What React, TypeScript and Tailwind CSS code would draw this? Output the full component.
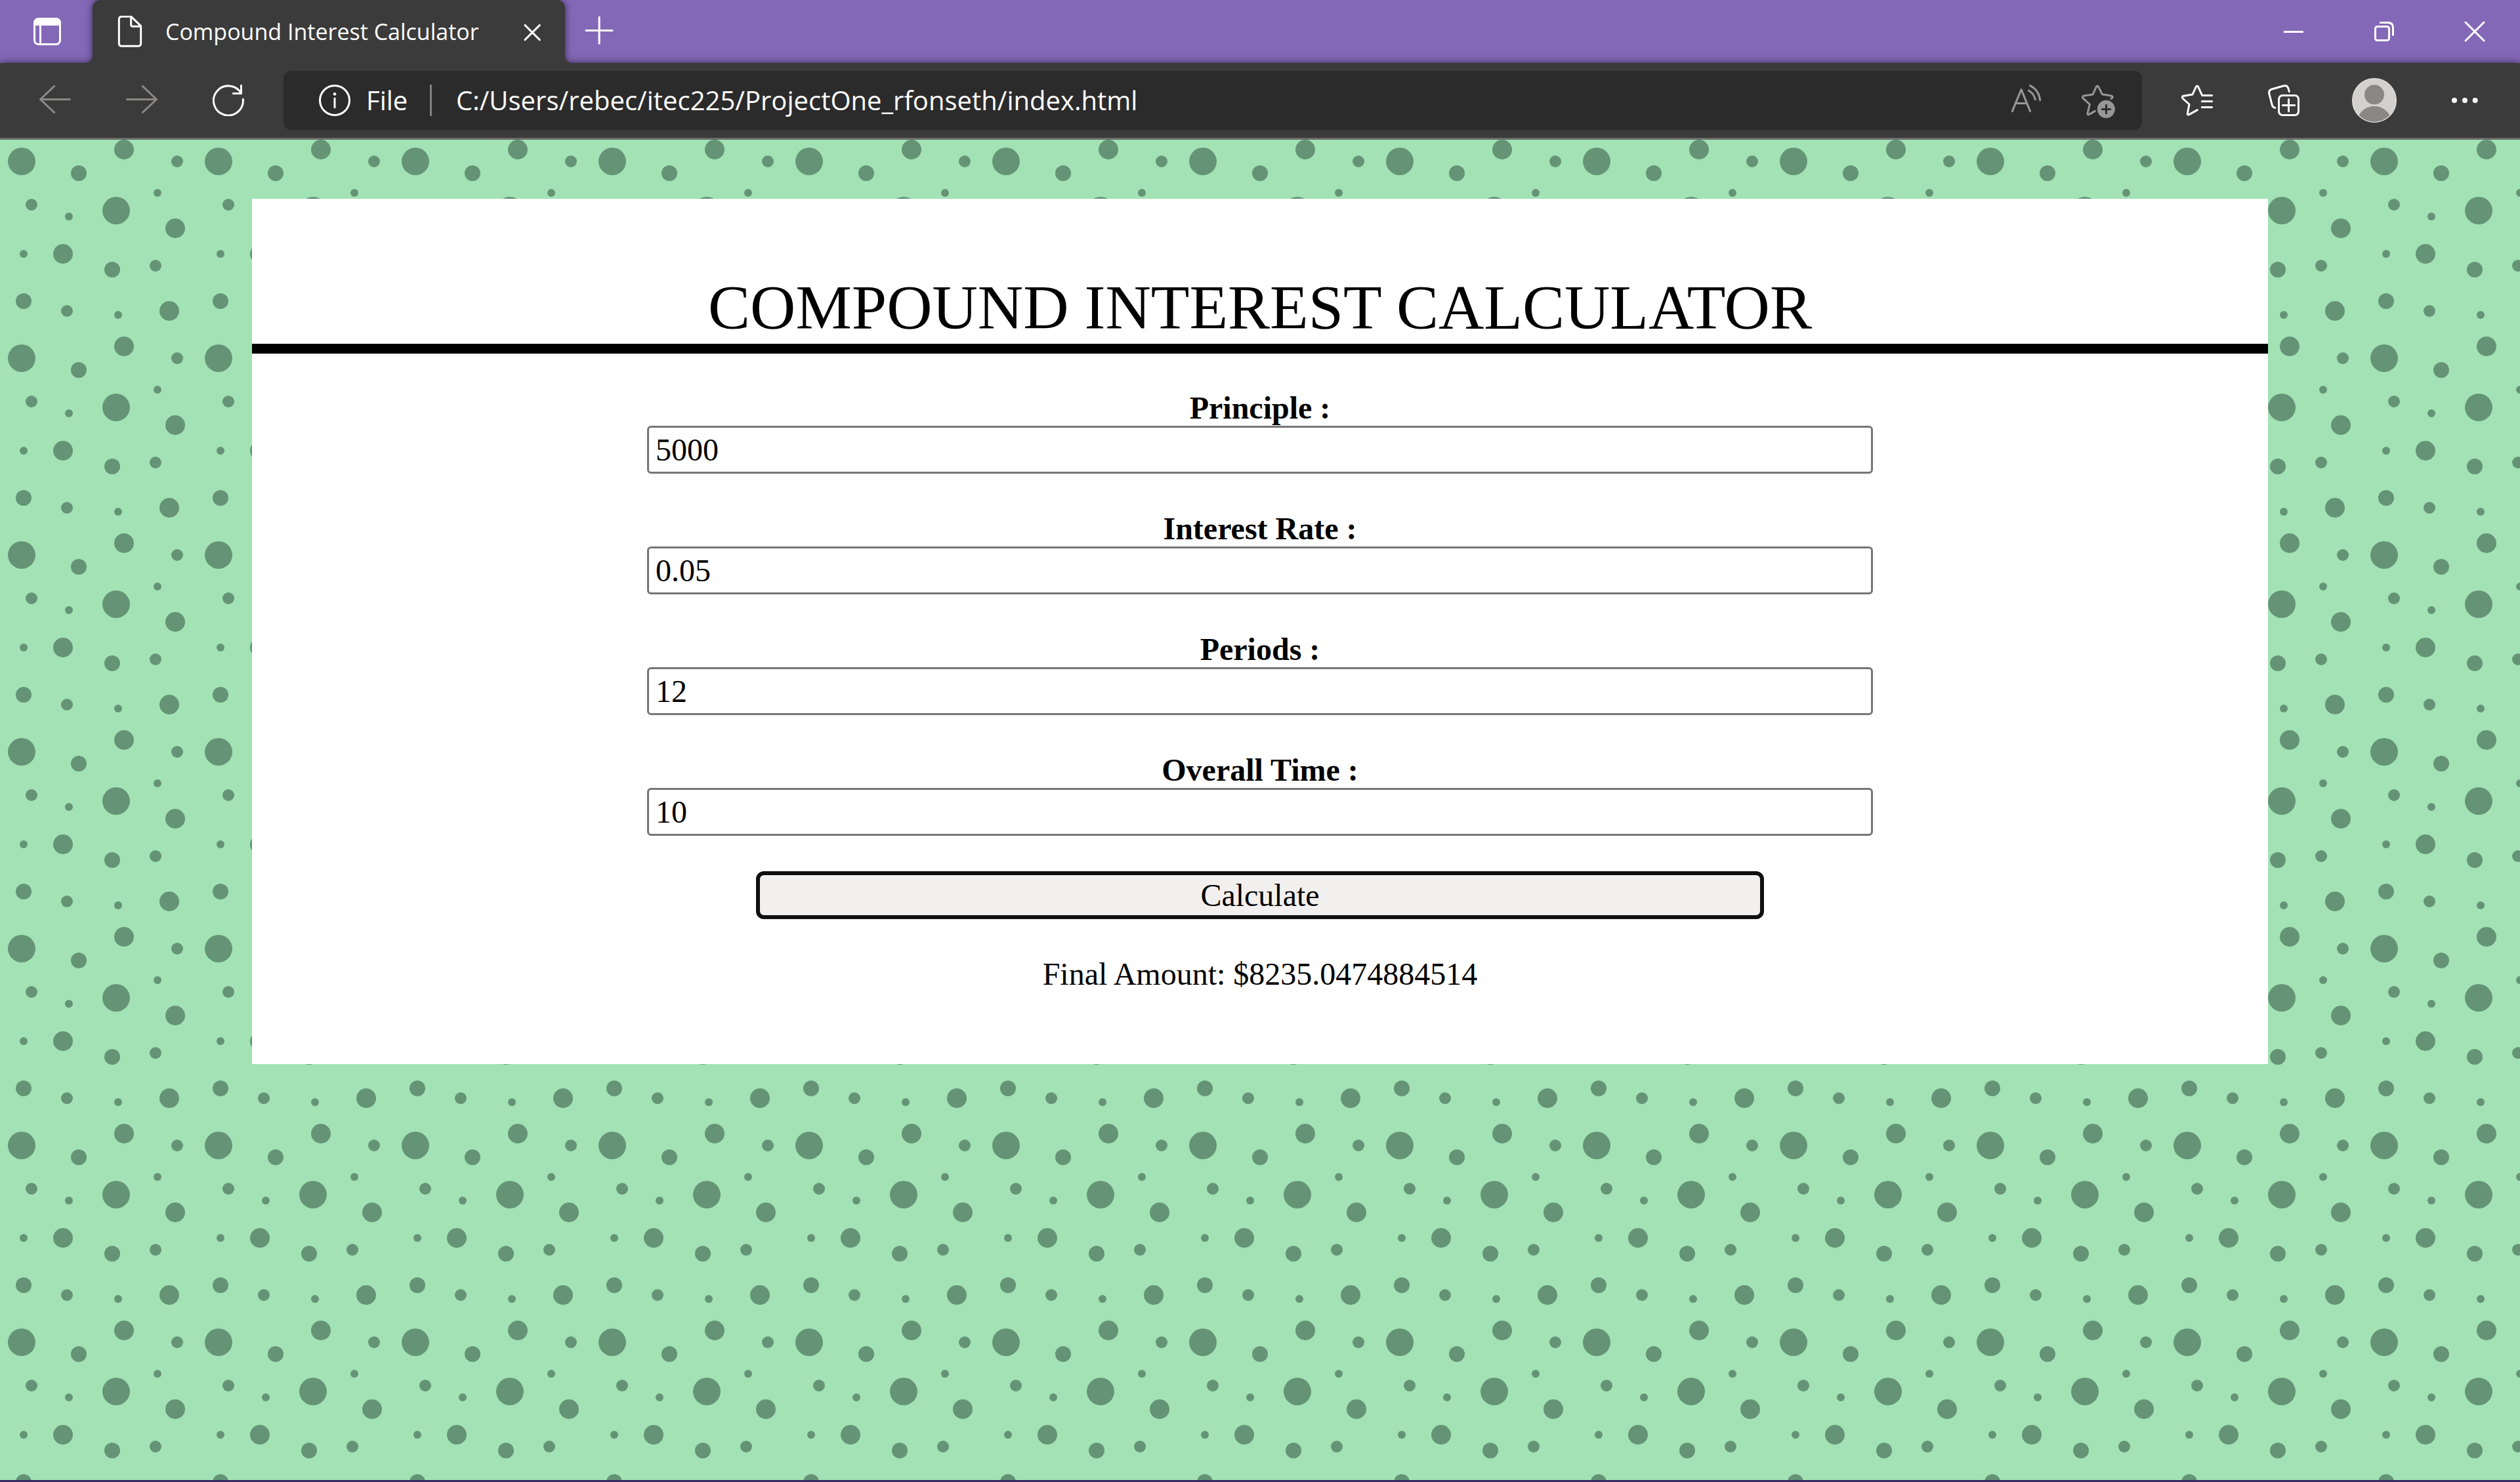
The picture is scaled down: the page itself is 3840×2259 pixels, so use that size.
import { useId, useState, type ReactNode } from "react";

type GlyphProps = { box: string; size?: string; children: ReactNode };

function Glyph({ box, size = "size-12", children }: GlyphProps) {
  return (
    <svg
      viewBox={box}
      className={`${size} shrink-0`}
      fill="none"
      stroke="currentColor"
      strokeWidth="9"
      strokeLinecap="round"
      strokeLinejoin="round"
      aria-hidden="true"
    >
      {children}
    </svg>
  );
}

type BarButtonProps = { label: string; className: string; children: ReactNode };

function BarButton({ label, className, children }: BarButtonProps) {
  return (
    <button type="button" aria-label={label} className={`flex shrink-0 items-center justify-center ${className}`}>
      {children}
    </button>
  );
}

function TabStrip() {
  return (
    <div className="flex h-24 items-stretch bg-[#8468b8] text-white">
      <BarButton label="Tab actions" className="w-[141px] pl-[3px]">
        <Glyph box="144 72 144 144">
          <rect x="157.500" y="85.500" width="117" height="117" rx="18" />
          <path d="M157 117V104Q157 85 176 85H256Q275 85 275 104V117Z" fill="currentColor" stroke="none" />
          <path d="M158 112H274M184.500 114V202" strokeLinecap="butt" />
        </Glyph>
      </BarButton>

      <div className="relative z-10 flex w-[720px] items-center rounded-t-xl bg-[#3b3b3b] pr-[14px] pl-[33px] shadow-[0_0_12px_rgba(0,0,0,0.6)] [clip-path:inset(0_-20px_0_-20px)]">
        <svg viewBox="0 0 12 12" className="absolute bottom-0 -left-3 size-3" aria-hidden="true">
          <path d="M12 0V12H0A12 12 0 0 0 12 0Z" fill="#3b3b3b" />
        </svg>
        <svg viewBox="0 0 12 12" className="absolute -right-3 bottom-0 size-3" aria-hidden="true">
          <path d="M0 0V12H12A12 12 0 0 1 0 0Z" fill="#3b3b3b" />
        </svg>
        <Glyph box="522 72 144 144">
          <path d="M557 76H600L644 119V198Q644 211 631 211H557Q544 211 544 198V89Q544 76 557 76Z" />
          <path d="M599 78V114Q599 121 607 121H642" />
        </Glyph>
        <span className="ml-[30px] grow text-[34px] leading-[48px] whitespace-nowrap">Compound Interest Calculator</span>
        <BarButton label="Close tab" className="size-[72px]">
          <Glyph box="982 72 144 144">
            <path d="M1021 115L1088 182M1088 115L1021 182" />
          </Glyph>
        </BarButton>
      </div>

      <BarButton label="New tab" className="ml-4 w-[72px]">
        <Glyph box="1288 72 144 144">
          <path d="M1300 139.500H1420M1360.500 79V199" />
        </Glyph>
      </BarButton>

      <div className="grow" />

      <BarButton label="Minimize" className="w-[138px]">
        <Glyph box="93 72 144 144">
          <path d="M120 145.500H210" strokeLinecap="butt" />
        </Glyph>
      </BarButton>
      <BarButton label="Restore" className="w-[138px]">
        <Glyph box="507 72 144 144">
          <rect x="538.500" y="121.500" width="63" height="63" rx="9" />
          <path d="M562 103.500H596Q619.500 103.500 619.500 127V160" />
        </Glyph>
      </BarButton>
      <BarButton label="Close window" className="w-[138px]">
        <Glyph box="921 72 144 144">
          <path d="M951 102L1035 186M1035 102L951 186" />
        </Glyph>
      </BarButton>
    </div>
  );
}

function Avatar() {
  const clip = useId();
  return (
    <svg viewBox="432 357 204 204" className="size-[68px]" aria-hidden="true">
      <clipPath id={clip}>
        <circle cx="534" cy="459" r="98" />
      </clipPath>
      <circle cx="534" cy="459" r="100" fill="#d3d1ce" stroke="#e4e3e1" strokeWidth="4" />
      <circle cx="534" cy="433" r="45" fill="#8b8785" />
      <circle cx="534" cy="565" r="80" fill="#8b8785" clipPath={`url(#${clip})`} />
    </svg>
  );
}

function Toolbar() {
  const [url, setUrl] = useState("C:/Users/rebec/itec225/ProjectOne_rfonseth/index.html");
  return (
    <div className="relative flex h-[117px] items-center border-b-[3px] border-[#6b6b6b] bg-[#3b3b3b] pr-[15px] pl-[18px] text-white shadow-[0_0_12px_rgba(0,0,0,0.6)] [clip-path:inset(-20px_0_0_0)]">
      <BarButton label="Back" className="h-[90px] w-[132px] text-[#8b8987]">
        <Glyph box="180 387 144 144">
          <path d="M184.500 454.500H320M248 394L184.500 454.500L248 514" />
        </Glyph>
      </BarButton>
      <BarButton label="Forward" className="h-[90px] w-[132px] text-[#8b8987]">
        <Glyph box="576 387 144 144">
          <path d="M580 454.500H715.500M652 394L715.500 454.500L652 514" />
        </Glyph>
      </BarButton>
      <BarButton label="Refresh" className="h-[90px] w-[132px]">
        <Glyph box="972 387 144 144">
          <path d="M1111 454A67.500 67.500 0 1 1 1102 426" />
          <path d="M1102.500 391V427.500H1066" />
        </Glyph>
      </BarButton>

      <div className="mx-[18px] flex h-[90px] grow items-center rounded-xl bg-[#2b2b2b] pl-[54px] text-[40px] leading-[54px]">
        <Glyph box="78 387 144 144">
          <circle cx="150" cy="459" r="67.500" />
          <circle cx="150" cy="430" r="7" fill="currentColor" stroke="none" />
          <path d="M150 450V491" />
        </Glyph>
        <span className="ml-6 w-[97px]">File</span>
        <div className="h-12 w-[3px] bg-[#808080]" />
        <input
          aria-label="Address"
          className="ml-[37px] min-w-0 grow bg-transparent outline-none"
          value={url}
          onChange={(e) => setUrl(e.target.value)}
        />
        <BarButton label="Read aloud" className="h-[90px] w-[108px] text-[#979797]">
          <Glyph box="87 99 180 180" size="size-15">
            <path d="M112 239L153 139L194 239M126 202.500H180" />
            <path d="M187 144Q211 158 217 185M193 121Q234 142 239 188" />
          </Glyph>
        </BarButton>
        <BarButton label="Add to favorites" className="mr-[14px] h-[90px] w-[108px] text-[#979797]">
          <Glyph box="405 99 180 180" size="size-15">
            <path d="M484 238L457 253Q449 257 450 248L460 207L429 179Q424 170 433 168L474 162L490 127Q495 119 500 127L517 161L558 168Q567 170 564 177L558 181" />
            <circle cx="535" cy="229" r="40.500" fill="currentColor" stroke="none" />
            <path d="M517 229.500H554M535.500 211V248" stroke="#2b2b2b" />
          </Glyph>
        </BarButton>
      </div>

      <BarButton label="Favorites" className="h-[90px] w-[132px]">
        <Glyph box="882 117 144 144">
          <path d="M955 233L917 254Q909 257 910 248L918 207L888 180Q883 171 892 169L933 162L949 127Q954 119 959 127L977 166.500H1022" />
          <path d="M976 193.500H1022M976 220.500H1022" />
        </Glyph>
      </BarButton>
      <BarButton label="Collections" className="h-[90px] w-[132px]">
        <Glyph box="1278 117 144 144">
          <path d="M1310 223Q1300 221 1297 211L1283 157Q1281 142 1295 138L1348 123Q1364 118 1370 132L1375 149" />
          <rect x="1327.500" y="166.500" width="90" height="90" rx="17" />
          <path d="M1345 211.500H1400M1372.500 184V239" />
        </Glyph>
      </BarButton>
      <BarButton label="Profile" className="ml-[3px] h-[90px] w-[138px]">
        <Avatar />
      </BarButton>
      <BarButton label="Settings and more" className="h-[90px] w-[138px]">
        <Glyph box="876 387 144 144">
          <g fill="currentColor" stroke="none">
            <circle cx="900" cy="459" r="12" />
            <circle cx="948" cy="459" r="12" />
            <circle cx="995" cy="459" r="12" />
          </g>
        </Glyph>
      </BarButton>
    </div>
  );
}

/* Bubble centres and radii within one 100-unit tile. */
const BUBBLES: [number, number, number][] = [
  [11, 11, 7], [59, 36, 7],
  [63, 5, 5], [89, 45, 5], [32, 58, 5], [86, 87, 5],
  [40, 17, 4], [57, 66, 4], [12, 82, 4],
  [90, 11, 3], [16, 33, 3], [79, 64, 3], [34, 87, 3],
  [80, 27, 2], [35, 39, 2], [12, 58, 2], [60, 89, 2],
];

function BubbleBackdrop() {
  const id = useId();
  return (
    <svg className="absolute inset-0 h-full w-full" aria-hidden="true">
      <pattern id={id} width="300" height="300" patternUnits="userSpaceOnUse">
        <g transform="scale(3)" fill="#649475">
          {BUBBLES.map(([x, y, r]) => (
            <circle key={`${x}-${y}`} cx={x} cy={y} r={r} />
          ))}
        </g>
      </pattern>
      <rect width="100%" height="100%" fill={`url(#${id})`} />
    </svg>
  );
}

const FIELDS = [
  { id: "principle", label: "Principle :", value: "5000" },
  { id: "rate", label: "Interest Rate :", value: "0.05" },
  { id: "periods", label: "Periods :", value: "12" },
  { id: "time", label: "Overall Time :", value: "10" },
];

function Calculator() {
  return (
    <section className="relative mx-auto mt-[90px] w-4/5 bg-white pb-[110px] text-center font-['Liberation_Serif',serif] text-5xl text-black">
      <h1 className="border-b-[15px] border-black pt-[111px] text-8xl leading-[110px]">COMPOUND INTEREST CALCULATOR</h1>
      <form className="flex flex-col items-center pt-[59px]" onSubmit={(e) => e.preventDefault()}>
        <div className="flex w-[1868px] max-w-full flex-col gap-[60px]">
          {FIELDS.map((f) => (
            <div key={f.id} className="flex flex-col">
              <label htmlFor={f.id} className="mb-1 leading-[47px] font-bold">
                {f.label}
              </label>
              <input
                id={f.id}
                defaultValue={f.value}
                className="h-[73px] rounded-md border-[3px] border-[#767676] bg-white px-[10px] leading-[55px]"
              />
            </div>
          ))}
        </div>
        <button
          type="submit"
          className="mt-[54px] h-[73px] w-1/2 rounded-xl border-[6px] border-[#101010] bg-[#f2f0ef] leading-[55px]"
        >
          Calculate
        </button>
        <output className="mt-14 leading-[55px]">Final Amount: $8235.0474884514</output>
      </form>
    </section>
  );
}

export default function App() {
  return (
    <div className="flex min-h-screen flex-col border-b-[3px] border-[#332a5f] font-['Open_Sans',sans-serif]">
      <header>
        <TabStrip />
        <Toolbar />
      </header>
      <main className="relative grow bg-[#a2e2b4]">
        <BubbleBackdrop />
        <Calculator />
      </main>
    </div>
  );
}
